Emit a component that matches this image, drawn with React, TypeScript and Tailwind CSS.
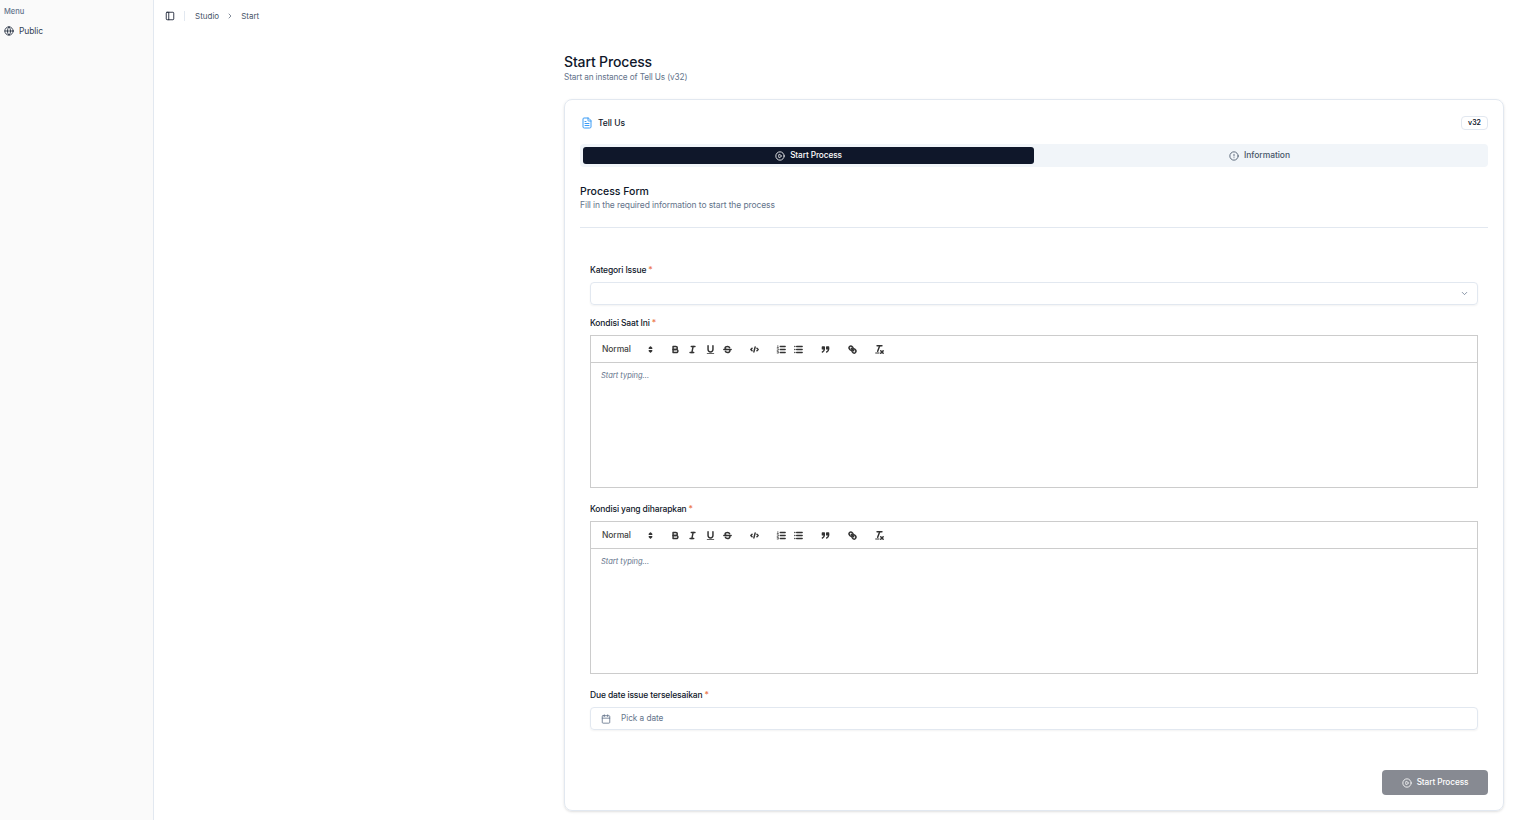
import { ChevronDown, ChevronRight, Calendar, CircleAlert, CirclePlay, FileText, Globe, PanelLeft } from 'lucide-react'

const stroke = { fill: 'none', stroke: '#333', strokeWidth: 2.4, strokeLinecap: 'round', strokeLinejoin: 'round' } as const

function QIcon({ children }: { children: React.ReactNode }) {
  return (
    <span className="flex w-[17.5px] items-center justify-center">
      <svg viewBox="0 0 18 18" className="h-[11px] w-[11px]">{children}</svg>
    </span>
  )
}

function Toolbar() {
  return (
    <div className="flex h-[27px] items-center border-b border-[#ccc] pl-[5px]">
      <div className="mr-[9.4px] flex w-[61px] items-center justify-between pl-[6px] pr-[1px]">
        <span className="text-[8.5px] font-medium tracking-[-0.1px] text-[#444]">Normal</span>
        <svg viewBox="0 0 18 18" className="h-[11px] w-[11px]">
          <polygon points="7 11 9 13 11 11 7 11" {...stroke} fill="#333" />
          <polygon points="7 7 9 5 11 7 7 7" {...stroke} fill="#333" />
        </svg>
      </div>
      <div className="mr-[9.4px] flex">
        <QIcon>
          <path d="M5,4H9.5A2.5,2.5,0,0,1,12,6.5v0A2.5,2.5,0,0,1,9.5,9H5V4Z" {...stroke} />
          <path d="M5,9h5.5A2.5,2.5,0,0,1,13,11.5v0A2.5,2.5,0,0,1,10.5,14H5V9Z" {...stroke} />
        </QIcon>
        <QIcon>
          <line x1="7" x2="13" y1="4" y2="4" {...stroke} />
          <line x1="5" x2="11" y1="14" y2="14" {...stroke} />
          <line x1="8" x2="10" y1="14" y2="4" {...stroke} />
        </QIcon>
        <QIcon>
          <path d="M5,3V9a4,4,0,0,0,4,4H9a4,4,0,0,0,4-4V3" {...stroke} />
          <rect x="3" y="15" width="12" height="1.5" rx=".5" fill="#333" />
        </QIcon>
        <QIcon>
          <line x1="3" x2="15" y1="9" y2="9" {...stroke} />
          <path d="M12.5,6C12,4.5,10.5,4,9,4,7,4,5,5,5,6.8,5,8,6,8.6,7,9" {...stroke} />
          <path d="M5.5,12C6,13.5,7.5,14,9,14c2,0,4-1,4-2.8a2.6,2.6,0,0,0-.6-1.7" {...stroke} />
        </QIcon>
      </div>
      <div className="mr-[9.4px] flex">
        <QIcon>
          <polyline points="5 7 3 9 5 11" {...stroke} />
          <polyline points="13 7 15 9 13 11" {...stroke} />
          <line x1="10" x2="8" y1="5" y2="13" {...stroke} />
        </QIcon>
      </div>
      <div className="mr-[9.4px] flex">
        <QIcon>
          <line x1="7" x2="15" y1="4" y2="4" {...stroke} />
          <line x1="7" x2="15" y1="9" y2="9" {...stroke} />
          <line x1="7" x2="15" y1="14" y2="14" {...stroke} />
          <path d="M3,2.5V6M2,6H4M2,8H4V10H2V12H4M2,13H4V15H2" {...stroke} strokeWidth={1} />
        </QIcon>
        <QIcon>
          <line x1="6" x2="15" y1="4" y2="4" {...stroke} />
          <line x1="6" x2="15" y1="9" y2="9" {...stroke} />
          <line x1="6" x2="15" y1="14" y2="14" {...stroke} />
          <line x1="3" x2="3" y1="4" y2="4" {...stroke} />
          <line x1="3" x2="3" y1="9" y2="9" {...stroke} />
          <line x1="3" x2="3" y1="14" y2="14" {...stroke} />
        </QIcon>
      </div>
      <div className="mr-[9.4px] flex">
        <QIcon>
          <rect x="4" y="5" width="3" height="3" {...stroke} fill="#333" />
          <rect x="11" y="5" width="3" height="3" {...stroke} fill="#333" />
          <path d="M7,8c0,4-3,5-3,5" {...stroke} />
          <path d="M14,8c0,4-3,5-3,5" {...stroke} />
        </QIcon>
      </div>
      <div className="mr-[9.4px] flex">
        <QIcon>
          <line x1="7" x2="11" y1="7" y2="11" {...stroke} />
          <path d="M8.9,4.577a3.476,3.476,0,0,1,.36,4.679A3.476,3.476,0,0,1,4.577,8.9C3.185,7.5,2.035,6.4,4.217,4.217S7.5,3.185,8.9,4.577Z" {...stroke} />
          <path d="M13.423,9.1a3.476,3.476,0,0,0-4.679-.36,3.476,3.476,0,0,0,.36,4.679c1.392,1.392,2.5,2.542,4.679.36S14.815,10.5,13.423,9.1Z" {...stroke} />
        </QIcon>
      </div>
      <div className="flex">
        <QIcon>
          <line x1="5" x2="13" y1="3" y2="3" {...stroke} />
          <line x1="6" x2="9.35" y1="12" y2="3" {...stroke} />
          <line x1="11" x2="15" y1="11" y2="15" {...stroke} />
          <line x1="15" x2="11" y1="11" y2="15" {...stroke} />
          <rect x="2" y="14" width="7" height="1.5" rx=".5" fill="#333" />
        </QIcon>
      </div>
    </div>
  )
}

function Label({ text }: { text: string }) {
  return (
    <div className="flex h-[14px] items-center text-[8.5px] font-medium tracking-[-0.14px] text-[#0f172a]">
      {text}
      <span className="ml-[2px] text-[#ec7a50]">*</span>
    </div>
  )
}

function Editor() {
  return (
    <div className="mt-[5px] h-[153px] border border-[#ccc]">
      <Toolbar />
      <div className="px-[10px] pt-[7px] text-[7.5px] italic text-[#64748b]">Start typing...</div>
    </div>
  )
}

export default function App() {
  return (
    <div className="flex min-h-screen bg-white font-['Inter',sans-serif] text-[#0f172a]">
      {/* Sidebar */}
      <aside className="w-[154px] shrink-0 border-r border-[#e2e8f0] bg-[#fafafa] pl-[4px] pt-[7px]">
        <div className="text-[7.5px] font-medium leading-[9px] text-[#64748b]">Menu</div>
        <div className="mt-[9px] flex items-center gap-[5px] text-[8.5px] tracking-[-0.1px]">
          <Globe className="h-[10px] w-[10px] text-[#1e293b]" />
          <span className="text-[#334155]">Public</span>
        </div>
      </aside>

      <div className="min-w-0 flex-1">
        {/* Header */}
        <header className="flex h-[32px] items-center pl-[11px] text-[8px] text-[#475569]">
          <PanelLeft className="h-[10px] w-[10px] text-[#0f172a]" />
          <span className="ml-[9px] mr-[10px] h-[10px] w-px bg-[#e2e8f0]" />
          <span>Studio</span>
          <ChevronRight className="mx-[7px] h-[8px] w-[8px]" />
          <span>Start</span>
        </header>

        <main className="ml-auto mr-[12px] w-[940px] pb-[9px] pt-[21px]">
          <h1 className="text-[14px] font-medium leading-[18px] tracking-[-0.15px] text-[#0f172a]">Start Process</h1>
          <p className="text-[8.25px] leading-[12px] tracking-[-0.13px] text-[#64748b]">Start an instance of Tell Us (v32)</p>

          <div className="mt-[16px] h-[712px] rounded-[8px] border border-[#e2e8f0] px-[15px] pt-[15px] shadow-sm">
            <div className="flex h-[16px] items-center justify-between">
              <div className="flex items-center gap-[5px] pl-[1px]">
                <FileText className="h-[12px] w-[12px] text-[#3b9cf6]" />
                <span className="text-[8.5px] font-medium tracking-[-0.05px]">Tell Us</span>
              </div>
              <span className="rounded-[4px] border border-[#e2e8f0] px-[6px] text-[7px] font-semibold leading-[12px]">v32</span>
            </div>

            {/* Tabs */}
            <div className="mt-[13px] flex h-[23px] rounded-[4px] bg-[#f1f5f9] p-[3px]">
              <div className="flex flex-1 items-center justify-center gap-[5px] rounded-[3px] bg-[#0f172a] text-[8.25px] font-medium tracking-[-0.1px] text-white">
                <CirclePlay className="h-[10px] w-[10px]" />
                Start Process
              </div>
              <div className="flex flex-1 items-center justify-center gap-[5px] text-[8.5px] font-medium tracking-[-0.05px] text-[#475569]">
                <CircleAlert className="h-[10px] w-[10px]" />
                Information
              </div>
            </div>

            <h2 className="mt-[18px] text-[10.5px] font-medium leading-[13px]">Process Form</h2>
            <p className="text-[8.5px] leading-[14px] tracking-[-0.1px] text-[#64748b]">Fill in the required information to start the process</p>
            <div className="mt-[15px] h-px bg-[#e2e8f0]" />

            {/* Form */}
            <div className="px-[10px] pt-[35px]">
              <Label text="Kategori Issue" />
              <div className="mt-[5px] flex h-[23px] items-center justify-end rounded-[4px] border border-[#e2e8f0] pr-[8px] shadow-xs">
                <ChevronDown className="h-[9px] w-[9px] text-[#64748b]" />
              </div>

              <div className="mt-[11px]"><Label text="Kondisi Saat Ini" /></div>
              <Editor />

              <div className="mt-[14px]"><Label text="Kondisi yang diharapkan" /></div>
              <Editor />

              <div className="mt-[14px]"><Label text="Due date issue terselesaikan" /></div>
              <div className="mt-[5px] flex h-[23px] items-center gap-[10px] rounded-[4px] border border-[#e2e8f0] pl-[10px] text-[8.25px] tracking-[-0.05px] text-[#64748b] shadow-xs">
                <Calendar className="h-[10px] w-[10px]" />
                Pick a date
              </div>
            </div>

            <div className="mt-[40px] flex justify-end">
              <div className="flex h-[25px] w-[106px] items-center justify-center gap-[5px] rounded-[4px] bg-[#878a92] text-[8.25px] font-medium tracking-[-0.1px] text-white">
                <CirclePlay className="h-[10px] w-[10px]" />
                Start Process
              </div>
            </div>
          </div>
        </main>
      </div>
    </div>
  )
}
